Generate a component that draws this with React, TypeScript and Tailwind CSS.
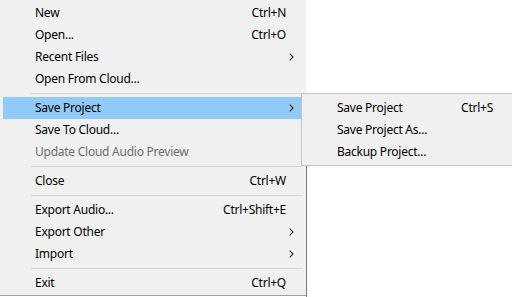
type Item =
  | { kind: "sep" }
  | { kind: "item"; label: string; shortcut?: string; sub?: boolean; disabled?: boolean; active?: boolean };

const MAIN: Item[] = [
  { kind: "item", label: "New", shortcut: "Ctrl+N" },
  { kind: "item", label: "Open...", shortcut: "Ctrl+O" },
  { kind: "item", label: "Recent Files", sub: true },
  { kind: "item", label: "Open From Cloud..." },
  { kind: "sep" },
  { kind: "item", label: "Save Project", sub: true, active: true },
  { kind: "item", label: "Save To Cloud..." },
  { kind: "item", label: "Update Cloud Audio Preview", disabled: true },
  { kind: "sep" },
  { kind: "item", label: "Close", shortcut: "Ctrl+W" },
  { kind: "sep" },
  { kind: "item", label: "Export Audio...", shortcut: "Ctrl+Shift+E" },
  { kind: "item", label: "Export Other", sub: true },
  { kind: "item", label: "Import", sub: true },
  { kind: "sep" },
  { kind: "item", label: "Exit", shortcut: "Ctrl+Q" },
];

const SAVE_SUB: Item[] = [
  { kind: "item", label: "Save Project", shortcut: "Ctrl+S" },
  { kind: "item", label: "Save Project As..." },
  { kind: "item", label: "Backup Project..." },
];

function Chevron() {
  return (
    <svg width="5" height="8" viewBox="0 0 5 8" className="absolute right-[9px] top-[7px]">
      <polyline points="0.7,0.7 4,4 0.7,7.3" fill="none" stroke="#2b2b2b" strokeWidth="1.1" />
    </svg>
  );
}

function MenuRow({ item }: { item: Item }) {
  if (item.kind === "sep") {
    return (
      <div className="h-[7px] flex items-center pl-[28px]">
        <div className="h-px w-full bg-[#d5d5d5]" />
      </div>
    );
  }
  return (
    <div
      className={
        "relative flex h-[22px] items-center pl-[32px] pr-[17px] " +
        (item.active ? "bg-[#91c9f7] " : "") +
        (item.disabled ? "text-[#6d6d6d]" : "text-black")
      }
    >
      <span className="flex-1 whitespace-nowrap">{item.label}</span>
      {item.shortcut && <span className="whitespace-nowrap">{item.shortcut}</span>}
      {item.sub && <Chevron />}
    </div>
  );
}

export default function App() {
  return (
    <div
      className="relative h-[297px] w-[512px] overflow-hidden bg-white text-[12px] leading-none tracking-[-0.25px]"
      style={{ fontFamily: '"Noto Sans", "Open Sans", sans-serif' }}
    >
      <div className="w-[306px] h-[296px] bg-[#f0f0f0] border-b border-[#a0a0a0] px-[3px] pt-[2px]">
        {MAIN.map((it, i) => (
          <MenuRow key={i} item={it} />
        ))}
      </div>
      <div className="absolute left-[306px] top-[166px] h-[131px] w-px bg-[#7a7a7a]" />

      {/* submenu overlay */}
      <div className="absolute left-[301px] top-[93px] w-[213px] h-[73px] bg-[#f0f0f0] border border-[#c4c4c4] px-[3px] pt-[3px]">
        {SAVE_SUB.map((it, i) => (
          <MenuRow key={i} item={it} />
        ))}
      </div>
    </div>
  );
}
